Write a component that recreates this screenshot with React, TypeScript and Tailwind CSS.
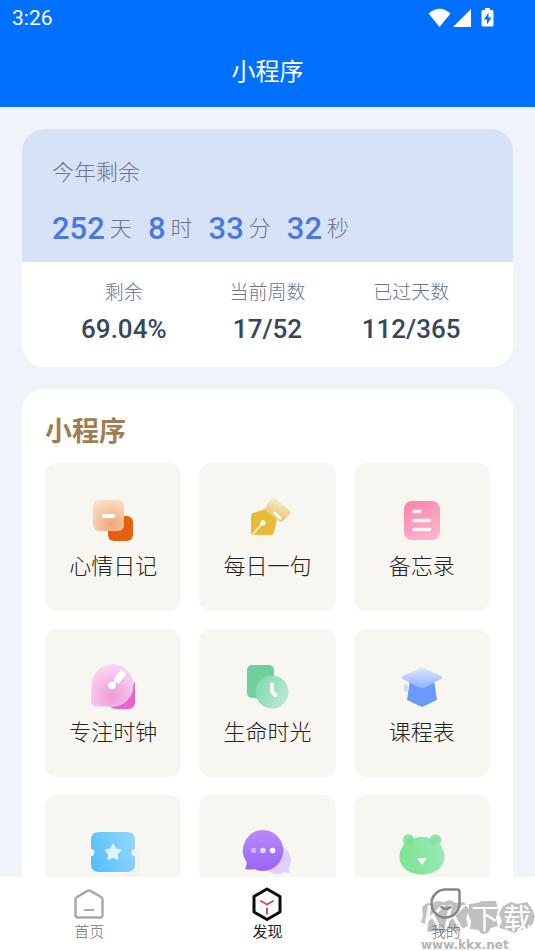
import type { ReactNode } from 'react'
import clsx from 'clsx'

const countdown = [
  { value: '252', unit: '天' },
  { value: '8', unit: '时' },
  { value: '33', unit: '分' },
  { value: '32', unit: '秒' },
]

const stats = [
  { label: '剩余', value: '69.04%' },
  { label: '当前周数', value: '17/52' },
  { label: '已过天数', value: '112/365' },
]

const DiaryIcon = () => (
  <>
    <defs>
      <radialGradient id="diary" cx="0.6" cy="0.8" r="0.8">
        <stop offset="0" stopColor="#f0a575" />
        <stop offset="1" stopColor="#fbdcc6" />
      </radialGradient>
    </defs>
    <rect x="19" y="20" width="25" height="25" rx="6" fill="#e4610f" />
    <rect x="4" y="4" width="31" height="31" rx="6" fill="url(#diary)" />
    <rect x="13" y="18" width="13" height="4" rx="1" fill="#fff" />
  </>
)

const PenIcon = () => (
  <>
    <defs>
      <linearGradient id="pen" x1="0.7" y1="0" x2="0.4" y2="0.8">
        <stop offset="0" stopColor="#f7f1dc" />
        <stop offset="1" stopColor="#e8cb78" />
      </linearGradient>
    </defs>
    <path
      d="M10 17l11-3.500q2-.5 3.500 1l7.500 7q2 1.500 1.500 4l-2.500 11q-.5 2-2.500 2.500H10q-2 0-2-2V20q0-2 2-3z"
      fill="#e9bb3d"
    />
    <path d="M29 2q1-1.500 3 0l15 13q1.500 1.500 0 3L40 25q-2 1.500-4 0L22 14q-1-1 0-2z" fill="url(#pen)" />
    <path d="M31.500 17l5.500 5" stroke="#fff" strokeWidth="3" strokeLinecap="round" />
    <path d="M9 39l11-12" stroke="#fdf3d0" strokeWidth="1.800" />
    <circle cx="20" cy="27" r="2.700" fill="#fff8e2" />
  </>
)

const MemoIcon = () => (
  <>
    <defs>
      <linearGradient id="memo" x1="0.200" y1="0" x2="0.700" y2="1">
        <stop offset="0" stopColor="#fa86ab" />
        <stop offset="1" stopColor="#fcb4cd" />
      </linearGradient>
    </defs>
    <rect x="6" y="5" width="36" height="39" rx="8" fill="url(#memo)" />
    <path d="M16 15.500h6M16 24.500h15.500M16 33.500h15.500" stroke="#fff3f7" strokeWidth="3.500" strokeLinecap="round" />
  </>
)

const ClockIcon = () => (
  <>
    <defs>
      <radialGradient id="focus" cx="0.500" cy="0.750" r="0.700">
        <stop offset="0" stopColor="#f09ada" />
        <stop offset="1" stopColor="#f8d6f1" />
      </radialGradient>
    </defs>
    <path d="M46 20v20q0 7-7 7H28q-5 0-8-3z" fill="#e964c4" />
    <path
      d="M23 2a21.500 21.500 0 0 1 0 43q-7-1-15-.5-6 0-6-6 .5-8 .5-15A21.500 21.500 0 0 1 23 2z"
      fill="url(#focus)"
    />
    <circle cx="23" cy="23.500" r="3.700" fill="#fff" />
    <path d="M24 22l4-4" stroke="#fff" strokeWidth="2.500" />
    <path d="M25 16.500l7.500-8.500 1.500 2.500 2-.5.500 3-7 9z" fill="#fff" />
  </>
)

const LifeIcon = () => (
  <>
    <defs>
      <linearGradient id="life" x1="0" y1="0.300" x2="1" y2="0.900">
        <stop offset="0" stopColor="#83d9b0" />
        <stop offset="1" stopColor="#bdecd6" />
      </linearGradient>
    </defs>
    <rect x="4" y="3" width="27" height="33" rx="5" fill="#6fcf9f" />
    <circle cx="29" cy="30" r="16.500" fill="url(#life)" />
    <path d="M29 22.500v6q0 2 3.500 4.500" fill="none" stroke="#fff" strokeWidth="4" strokeLinecap="round" />
  </>
)

const CourseIcon = () => (
  <>
    <defs>
      <linearGradient id="course" x1="0" y1="0" x2="0" y2="1">
        <stop offset="0" stopColor="#dfe9fd" />
        <stop offset="1" stopColor="#8eb0fb" />
      </linearGradient>
    </defs>
    <path d="M12 18h24l3 20-15 7-15-7z" fill="#6c9afb" />
    <ellipse cx="8" cy="26" rx="1.800" ry="4" fill="#c6d8fc" />
    <path d="M22 6q2-1 4 0l17 8q2 1.500 0 3l-16 8.500q-3 1.500-6 0L5 17q-2-1.500 0-3z" fill="url(#course)" />
  </>
)

const TicketIcon = () => (
  <>
    <defs>
      <linearGradient id="ticket" x1="0" y1="0.700" x2="1" y2="0.300">
        <stop offset="0" stopColor="#53bff9" />
        <stop offset="1" stopColor="#93d6fb" />
      </linearGradient>
    </defs>
    <rect x="36" y="20" width="15" height="28" rx="4" fill="#f1f2f2" />
    <path
      d="M10 4h28q8 0 8 8v9a3.500 3.500 0 0 0 0 7v8q0 8-8 8H10q-8 0-8-8v-8a3.500 3.500 0 0 0 0-7v-9q0-8 8-8z"
      fill="url(#ticket)"
    />
    <path
      d="M24 17l2.300 4.500 5 .8-3.500 3.600.7 5L24 28.700 19.500 31l.7-5-3.500-3.700 5-.8z"
      fill="#e0f2fe"
      stroke="#e0f2fe"
      strokeWidth="2"
      strokeLinejoin="round"
    />
  </>
)

const ChatIcon = () => (
  <>
    <defs>
      <linearGradient id="chat" x1="0" y1="0" x2="0" y2="1">
        <stop offset="0" stopColor="#b78bf7" />
        <stop offset="1" stopColor="#9a63f3" />
      </linearGradient>
    </defs>
    <path d="M35 18a14 14 0 0 1 11 21q0 3 1 6-3 0-6-1a14 14 0 1 1-6-26z" fill="#e2cefb" />
    <path d="M20 2a20.500 20.500 0 1 1-9 39q-4 1-9 0 2-3 1.500-7A20.500 20.500 0 0 1 20 2z" fill="url(#chat)" />
    <circle cx="10.500" cy="22.500" r="2.800" fill="#cfb3fb" />
    <circle cx="20" cy="22.500" r="2.800" fill="#e6d8fd" />
    <circle cx="29.500" cy="22.500" r="2.800" fill="#fff" />
  </>
)

const BearIcon = () => (
  <>
    <defs>
      <linearGradient id="bear" x1="0" y1="0.600" x2="1" y2="0.400">
        <stop offset="0" stopColor="#7de58f" />
        <stop offset="1" stopColor="#98e8b9" />
      </linearGradient>
    </defs>
    <circle cx="10.500" cy="12" r="5.800" fill="#8fe6a6" />
    <circle cx="37.500" cy="12" r="5.800" fill="#8fe6a6" />
    <path d="M24 9c14 0 22.500 9 22.500 20S36 46.500 24 46.500 1.500 40 1.500 29 10 9 24 9z" fill="url(#bear)" />
    <circle cx="12" cy="13" r="3.500" fill="#7cdf95" />
    <circle cx="36" cy="13" r="3.500" fill="#85e0a3" />
    <path d="M21 31h6l-3 4.500z" fill="#fff" stroke="#fff" strokeWidth="2" strokeLinejoin="round" />
  </>
)

const apps: { id: string; name?: string; icon: ReactNode }[] = [
  { id: 'diary', name: '心情日记', icon: <DiaryIcon /> },
  { id: 'sentence', name: '每日一句', icon: <PenIcon /> },
  { id: 'memo', name: '备忘录', icon: <MemoIcon /> },
  { id: 'focus', name: '专注时钟', icon: <ClockIcon /> },
  { id: 'life', name: '生命时光', icon: <LifeIcon /> },
  { id: 'course', name: '课程表', icon: <CourseIcon /> },
  { id: 'ticket', icon: <TicketIcon /> },
  { id: 'chat', icon: <ChatIcon /> },
  { id: 'bear', icon: <BearIcon /> },
]

const tabs: { name: string; active?: boolean; icon: ReactNode }[] = [
  {
    name: '首页',
    icon: (
      <g stroke="#a9a9a9" strokeWidth="2.500">
        <path d="M4 9l10.500-6.200q1.500-.8 3 0L28 9q1.500.8 1.500 2.500V27q0 2.500-2.500 2.500H5Q2.500 29.500 2.500 27V11.500Q2.500 9.800 4 9z" />
        <path d="M12 22h8.500" strokeWidth="2" />
      </g>
    ),
  },
  {
    name: '发现',
    active: true,
    icon: (
      <>
        <path d="M16 1L29 8.500v15.500L16 31.500 3 24V8.500z" stroke="#0c0c0c" strokeWidth="3" />
        <path d="M10 13l6 3.500 6-3.500M16 20.500v5" stroke="#dd4b4f" strokeWidth="2" />
      </>
    ),
  },
  {
    name: '我的',
    icon: (
      <g stroke="#868686" strokeWidth="2.500">
        <path d="M16 1.500h11q2.500 0 2.500 2.500v12A14 14 0 1 1 16 1.500z" />
        <path d="M11.500 19q4.500 4 9 0" />
      </g>
    ),
  },
]

const StatusBar = () => (
  <div className="flex h-9 items-center justify-between pr-10 pl-3">
    <span className="font-[Roboto] text-[21px] leading-6 font-normal">3:26</span>
    <svg width="68" height="22" viewBox="0 0 68 22" fill="#fff" aria-hidden="true">
      <path d="M1.500 6.500q11-9.500 22 0L12.500 20z" />
      <path d="M44 2v18H26z" />
      <path d="M58 1h5v2h2q1.500 0 1.500 1.500v13.500q0 1.500-1.500 1.500h-9q-1.500 0-1.500-1.500V4.500Q54.500 3 56 3h2z" />
      <path d="M61.500 5.500l-4.500 7h3v5l4.500-7h-3z" fill="#0170fe" />
    </svg>
  </div>
)

const YearCard = () => (
  <section className="overflow-hidden rounded-[22px] bg-white text-[#66778d]">
    <div className="bg-[#d8e2f6] px-[30px] pt-[25px] pb-2.5">
      <h2 className="text-[22px] leading-8">今年剩余</h2>
      <div className="mt-5 flex gap-4">
        {countdown.map((item) => (
          <div key={item.unit} className="flex items-start gap-[5px]">
            <span className="font-[Roboto] text-[31px] leading-[46px] font-medium text-[#4a78df]">{item.value}</span>
            <span className="text-[22px] leading-10">{item.unit}</span>
          </div>
        ))}
      </div>
    </div>
    <dl className="grid grid-cols-3 px-[30px] pt-[15px] pb-[22px] text-center">
      {stats.map((item) => (
        <div key={item.label}>
          <dt className="text-[19px] leading-7">{item.label}</dt>
          <dd className="mt-2 font-[Roboto] text-[26px] leading-8 font-medium text-[#34475d]">{item.value}</dd>
        </div>
      ))}
    </dl>
  </section>
)

const Watermark = () => (
  <div className="pointer-events-none absolute right-0 bottom-0 w-[116px]" aria-hidden="true">
    <div className="relative">
      <svg width="116" height="36" viewBox="0 0 116 36" fill="#c0c0c0" className="block">
        <path d="M3 8l5-4 5 1 4-3 8 1 6-2 6 3 8-1 5 8-3 8 2 8-6 3-5 3-7-3-6 4-8-2-8 1-2-7-5-3 2-6z" />
        <path d="M50 5l8-1 5-2 14 0 2 9-2 8 2 8-7 2-3 5-6 1-4-4-8-1 1-8-3-8z" />
        <path d="M84 7l8-4 6 2 10-2 5 7 3 7-2 7-4 6-9 1-6 3-7-3-8-2 3-7-3-7z" />
      </svg>
      <div className="absolute inset-0 flex items-center gap-1 text-[28px] leading-8 font-normal text-white">
        <span className="w-12 pl-1 font-[Roboto] text-[34px] italic">KK</span>
        <span>下</span>
        <span>载</span>
      </div>
    </div>
    <p className="mt-1 pl-0.5 font-['DejaVu_Sans'] text-[12px] leading-3 font-bold text-[#b4b4b4]">www.kkx.net</p>
  </div>
)

export default function App() {
  return (
    <div className="flex h-screen flex-col bg-[#eef4f9] font-['Noto_Sans_CJK_SC',sans-serif] font-light">
      <header className="shrink-0 bg-[#0170fe] text-white">
        <StatusBar />
        <h1 className="pt-[18px] pb-[21px] text-center text-2xl leading-8 font-normal">小程序</h1>
      </header>

      <main className="min-h-0 flex-1 space-y-[22px] overflow-y-auto px-[22px] pt-[22px] [scrollbar-width:none]">
        <YearCard />

        <section className="rounded-[22px] bg-white px-[23px] pt-[21px] pb-6">
          <h2 className="text-[27px] leading-10 font-bold text-[#a07e52]">小程序</h2>
          <div className="mt-[13px] grid grid-cols-3 gap-[18px]">
            {apps.map((app) => (
              <button
                key={app.id}
                type="button"
                aria-label={app.name ?? app.id}
                className="flex min-h-[148px] flex-col items-center gap-1.5 rounded-xl bg-[#f7f6f0] pt-[33px]"
              >
                <svg width="48" height="48" viewBox="0 0 48 48" className="overflow-visible" aria-hidden="true">
                  {app.icon}
                </svg>
                {app.name && (
                  <span className="font-[KaiTi,STKaiti,'Noto_Sans_CJK_SC',sans-serif] text-[22px] leading-7 text-[#222]">
                    {app.name}
                  </span>
                )}
              </button>
            ))}
          </div>
        </section>
      </main>

      <nav className="relative grid shrink-0 grid-cols-3 bg-white">
        <Watermark />
        {tabs.map((tab) => (
          <button
            key={tab.name}
            type="button"
            className={clsx(
              'relative flex flex-col items-center gap-px pt-[11px] pb-2.5 text-[15px] leading-5',
              tab.active ? 'font-normal text-[#222]' : 'text-[#707070]',
            )}
          >
            <svg
              width="32"
              height="32"
              viewBox="0 0 32 32"
              fill="none"
              strokeLinecap="round"
              strokeLinejoin="round"
              className="overflow-visible"
              aria-hidden="true"
            >
              {tab.icon}
            </svg>
            {tab.name}
          </button>
        ))}
      </nav>
    </div>
  )
}
